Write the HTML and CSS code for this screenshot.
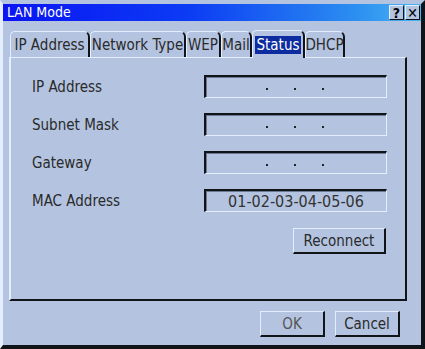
FILE: index.html
```html
<!DOCTYPE html>
<html lang="en">
<head>
  <meta charset="UTF-8">
  <title>LAN Mode</title>
  <link rel="stylesheet" href="styles.css">
</head>
<body>
  <div class="window">
    <div class="titlebar">
      <span class="titlebar__text">LAN Mode</span>
      <div class="titlebar__buttons">
        <span class="titlebar__btn">?</span>
        <span class="titlebar__btn">&#x2715;</span>
      </div>
    </div>

    <div class="dialog">
      <div class="tabs">
        <div class="tab tab--ip">IP Address</div>
        <div class="tab tab--net">Network Type</div>
        <div class="tab tab--wep">WEP</div>
        <div class="tab tab--mail">Mail</div>
        <div class="tab tab--status tab--active"><span class="tab__label">Status</span></div>
        <div class="tab tab--dhcp">DHCP</div>
      </div>

      <div class="panel">
        <div class="fields">
          <div class="label">IP Address</div>
          <div class="field field--ip"><span class="dot"></span><span class="dot"></span><span class="dot"></span></div>
          <div class="label">Subnet Mask</div>
          <div class="field field--ip"><span class="dot"></span><span class="dot"></span><span class="dot"></span></div>
          <div class="label">Gateway</div>
          <div class="field field--ip"><span class="dot"></span><span class="dot"></span><span class="dot"></span></div>
          <div class="label">MAC Address</div>
          <div class="field field--mac">01-02-03-04-05-06</div>
        </div>
        <div class="panel__actions">
          <button class="btn btn--reconnect">Reconnect</button>
        </div>
      </div>

      <div class="footer">
        <button class="btn btn--ok">OK</button>
        <button class="btn btn--cancel">Cancel</button>
      </div>
    </div>
  </div>
</body>
</html>
```

FILE: styles.css
```css
*,
*::after,
*::before {
  padding: 0;
  margin: 0;
  box-sizing: border-box;
}

:root {
  --face: #b4c4e0;
  --light: #e4eeff;
  --dark: #101418;
  --shade: #6a7890;
  --text: #2a2a2a;
}

body {
  background-color: var(--face);
  font-family: "DejaVu Sans Condensed", "DejaVu Sans", sans-serif;
  font-size: 15px;
  color: var(--text);
}

.window {
  width: 425px;
  height: 349px;
  display: flex;
  flex-direction: column;
  background-color: var(--face);
  border-top: 4px solid var(--face);
  border-left: 3px solid var(--light);
  border-right: 4px solid var(--dark);
  border-bottom: 4px solid var(--dark);
}

.titlebar {
  height: 17px;
  display: flex;
  align-items: center;
  justify-content: space-between;
  padding-left: 4px;
  padding-right: 1px;
  background-image: linear-gradient(to right, #0a14f4 0%, #0c3cf4 45%, #2c90f0 85%, #4cb4f4 100%);
}

.titlebar__text {
  color: #fff;
  font-size: 14px;
  line-height: 17px;
}

.titlebar__buttons {
  display: flex;
  gap: 1px;
}

.titlebar__btn {
  width: 15px;
  height: 15px;
  display: flex;
  align-items: center;
  justify-content: center;
  background-color: var(--face);
  color: #000;
  font-size: 14px;
  font-weight: bold;
  line-height: 1;
  border-top: 1px solid var(--light);
  border-left: 1px solid var(--light);
  border-right: 1px solid var(--dark);
  border-bottom: 1px solid var(--dark);
}

.dialog {
  flex: 1;
  display: flex;
  flex-direction: column;
  padding: 9px 14px 0 6px;
}

.tabs {
  display: flex;
  height: 27px;
  padding-left: 1px;
  align-items: flex-end;
}

.tab {
  height: 26px;
  display: flex;
  align-items: center;
  justify-content: center;
  border-top: 1px solid var(--light);
  border-left: 1px solid var(--light);
  border-right: 2px solid var(--dark);
  border-radius: 5px 6px 0 0;
  white-space: nowrap;
  padding-top: 1px;
}

.tab--ip { width: 80px; }
.tab--net { width: 96px; }
.tab--wep { width: 35px; }
.tab--mail { width: 31px; }
.tab--status { width: 53px; }
.tab--dhcp { width: 40px; }

.tab--active {
  height: 28px;
  margin-bottom: -1px;
  position: relative;
  z-index: 1;
  background-color: var(--face);
}

.tab__label {
  background-color: #0c2ca0;
  color: #fff;
  padding: 0 1px;
  line-height: 18px;
}

.panel {
  height: 244px;
  display: flex;
  flex-direction: column;
  border-top: 1px solid var(--light);
  border-left: 2px solid var(--light);
  border-right: 2px solid var(--dark);
  border-bottom: 2px solid var(--dark);
  padding: 17px 19px 0 21px;
}

.fields {
  display: grid;
  grid-template-columns: 172px 183px;
  row-gap: 15px;
  align-items: center;
}

.label {
  font-size: 15px;
}

.field {
  height: 23px;
  display: flex;
  align-items: center;
  justify-content: center;
  border-top: 2px solid var(--dark);
  border-left: 2px solid var(--dark);
  border-right: 1px solid var(--light);
  border-bottom: 1px solid var(--light);
  box-shadow: inset 1px 1px 0 var(--shade);
}

.field--ip {
  gap: 26px;
  padding-top: 4px;
  padding-right: 2px;
}

.dot {
  width: 2px;
  height: 2px;
  background-color: #222;
}

.field--mac {
  color: #333;
  font-size: 16px;
}

.panel__actions {
  display: flex;
  justify-content: flex-end;
  margin-top: 16px;
}

.btn {
  height: 26px;
  background-color: var(--face);
  font-family: inherit;
  font-size: 15px;
  color: var(--text);
  border-top: 1px solid var(--light);
  border-left: 1px solid var(--light);
  border-right: 2px solid var(--dark);
  border-bottom: 2px solid var(--dark);
}

.btn--reconnect {
  width: 93px;
}

.footer {
  display: flex;
  justify-content: flex-end;
  gap: 10px;
  margin-top: 10px;
  padding-right: 7px;
}

.btn--ok,
.btn--cancel {
  width: 65px;
}

.btn--ok {
  color: #555;
}
```
